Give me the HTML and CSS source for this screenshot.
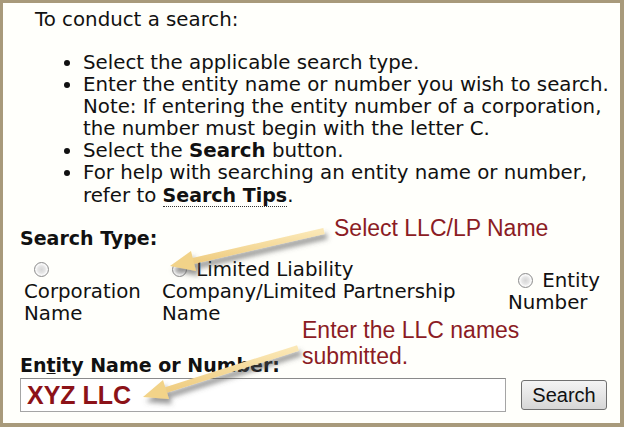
FILE: index.html
```html
<!DOCTYPE html>
<html lang="en">
<head>
  <meta charset="UTF-8">
  <title>Business Search</title>
  <link rel="stylesheet" href="styles.css">
</head>
<body>
  <div class="frame">
    <p class="intro">To conduct a search:</p>
    <ul class="steps">
      <li>Select the applicable search type.</li>
      <li>Enter the entity name or number you wish to search. Note: If entering the entity number of a corporation, the number must begin with the letter C.</li>
      <li>Select the <b>Search</b> button.</li>
      <li>For help with searching an entity name or number, refer to <a class="tips" href="#">Search Tips</a>.</li>
    </ul>

    <div class="search-type">
      <div class="field-title">Search Type:</div>
      <div class="types">
        <label class="type"><input type="radio" name="type"> Corporation Name</label>
        <label class="type"><input type="radio" name="type"> Limited Liability Company/Limited Partnership Name</label>
        <label class="type"><input type="radio" name="type"> Entity Number</label>
      </div>
    </div>

    <div class="entity">
      <label class="field-title" for="entityName">En<u>t</u>ity Name or Number:</label>
      <div class="entity-row">
        <input type="text" id="entityName" value="XYZ LLC">
        <button class="search-btn">Search</button>
      </div>
    </div>

    <div class="note note-select">Select LLC/LP Name</div>
    <div class="note note-enter">Enter the LLC names<br>submitted.</div>

    <svg class="arrows" width="624" height="427" viewBox="0 0 624 427">
      <defs>
        <filter id="shade" x="-20%" y="-20%" width="140%" height="160%">
          <feDropShadow dx="3" dy="5" stdDeviation="2.5" flood-color="#555" flood-opacity="0.6"/>
        </filter>
        <linearGradient id="gold" x1="0" y1="0" x2="0" y2="1">
          <stop offset="0" stop-color="#fbe8b6"/>
          <stop offset="1" stop-color="#efcd82"/>
        </linearGradient>
      </defs>
      <g filter="url(#shade)">
        <line x1="324" y1="231" x2="193" y2="261" stroke="url(#gold)" stroke-width="6"/>
        <polygon points="170,266 196,271 191,251" fill="#f2d389"/>
      </g>
      <g filter="url(#shade)">
        <line x1="298" y1="348" x2="166" y2="390" stroke="url(#gold)" stroke-width="6"/>
        <polygon points="143,397 169,399 163,380" fill="#f2d389"/>
      </g>
    </svg>
  </div>
</body>
</html>
```

FILE: styles.css
```css
body {
  margin: 0;
  background-color: #fffffb;
}

.frame {
  position: relative;
  box-sizing: border-box;
  width: 624px;
  height: 427px;
  padding: 6px 5px 0 17px;
  border: 3px solid #a89a7b;
  border-right-width: 4px;
  border-bottom-width: 4px;
  background-color: #fffffb;
  font-family: "DejaVu Sans", Verdana, sans-serif;
  font-size: 19.8px;
  line-height: 22px;
  color: #111;
  overflow: hidden;
}

.intro {
  margin: 0 0 21px 15px;
}

.steps {
  margin: 0;
  padding-left: 63px;
}

.steps b {
  font-weight: bold;
}

.tips {
  color: #111;
  font-size: 19px;
  font-weight: bold;
  text-decoration: none;
  border-bottom: 1px dotted #333;
}

.search-type {
  margin-top: 20px;
}

.field-title {
  display: block;
  font-size: 19px;
  font-weight: bold;
}

.field-title u {
  text-decoration-thickness: 1px;
}

.types {
  display: grid;
  grid-template-columns: 138px 346px 1fr;
  align-items: center;
  margin-top: 10px;
  padding-left: 4px;
}

.type input {
  appearance: none;
  width: 15px;
  height: 15px;
  margin: 0 3px 0 10px;
  vertical-align: -1px;
  border-radius: 50%;
  border: 1px solid #8e8e8e;
  background: radial-gradient(circle, #d6d6d6 0, #e6e6e6 40%, #fbfbfb 62%, #c4c4c4 100%);
}

.entity {
  margin-top: 29px;
}

.entity-row {
  display: flex;
  align-items: center;
  gap: 15px;
  margin-top: 2px;
}

.entity-row input {
  box-sizing: border-box;
  width: 486px;
  height: 34px;
  padding: 0 6px;
  border: 1px solid #a5a5a5;
  border-top-color: #8a8a8a;
  background-color: #fff;
  font-family: "Liberation Sans", Arial, sans-serif;
  font-size: 25px;
  font-weight: bold;
  color: #8c1218;
}

.search-btn {
  width: 86px;
  height: 30px;
  padding: 0;
  border: 1px solid #707070;
  border-radius: 3px;
  background: linear-gradient(#f4f4f4, #e6e6e6 50%, #d6d6d6);
  font-family: "Liberation Sans", Arial, sans-serif;
  font-size: 20px;
  color: #111;
}

.note {
  position: absolute;
  font-family: "Liberation Sans", Arial, sans-serif;
  font-size: 23px;
  line-height: 26px;
  color: #8b1c24;
}

.note-select {
  left: 331px;
  top: 212px;
}

.note-enter {
  left: 299px;
  top: 314px;
}

.arrows {
  position: absolute;
  left: -3px;
  top: -3px;
  pointer-events: none;
}
```
